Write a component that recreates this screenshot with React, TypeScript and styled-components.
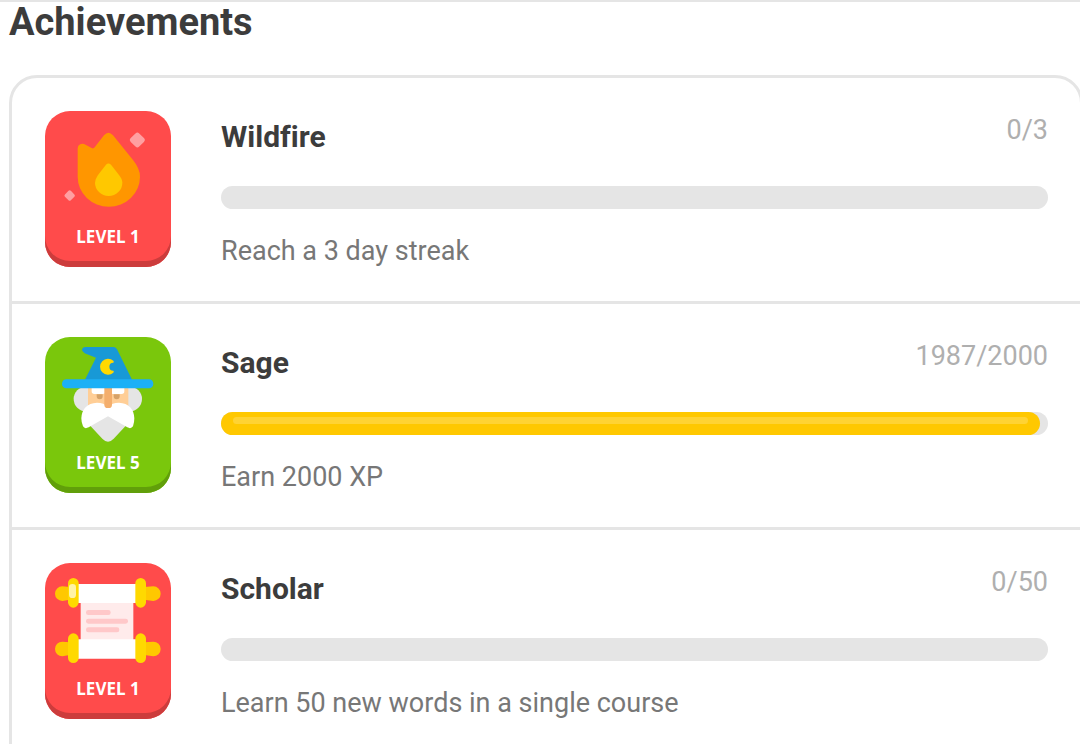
import React from "react";
import styled, { createGlobalStyle } from "styled-components";

const GlobalStyle = createGlobalStyle`
  *, *::before, *::after { box-sizing: border-box; }
  html { overflow-x: hidden; }
  body {
    margin: 0;
    background: #fff;
    color: #3c3c3c;
    font-family: Roboto, "Liberation Sans", sans-serif;
    overflow-x: hidden;
  }
`;

const Page = styled.main`
  border-top: 2px solid #e5e5e5;
  padding-left: 9px;
`;

const Heading = styled.h1`
  margin: 0 0 33px;
  font-size: 38px;
  line-height: 40px;
  font-weight: 700;
`;

const List = styled.ul`
  list-style: none;
  margin: 0 -3px 0 0;
  padding: 0;
  border: 3px solid #e5e5e5;
  border-radius: 28px 28px 0 0;
`;

const Row = styled.li`
  display: flex;
  gap: 50px;
  padding: 33px 32px 34px 33px;

  & + & {
    border-top: 3px solid #e5e5e5;
  }
`;

const Badge = styled.div<{ $face: string; $edge: string }>`
  flex: none;
  display: flex;
  flex-direction: column;
  align-items: center;
  width: 126px;
  height: 156px;
  border-radius: 25px;
  background: ${(p) => p.$face};
  box-shadow: inset 0 -6px 0 ${(p) => p.$edge};
`;

const Art = styled.svg`
  display: block;
  width: 126px;
  height: 114px;
`;

const Level = styled.span`
  color: #fff;
  font-family: "Noto Sans", sans-serif;
  font-size: 17px;
  line-height: 24px;
  font-weight: 700;
`;

const Details = styled.div`
  flex: 1;
  min-width: 0;
`;

const TitleLine = styled.div`
  display: flex;
  justify-content: space-between;
  align-items: flex-start;
  margin-bottom: 23px;
`;

const Title = styled.h2`
  margin: 0;
  font-size: 30px;
  line-height: 52px;
  font-weight: 700;
  font-variant-ligatures: none;
`;

const Count = styled.span`
  color: #afafaf;
  font-size: 27px;
  line-height: 38px;
`;

const Track = styled.div`
  height: 23px;
  border-radius: 12px;
  background: #e5e5e5;
`;

const Fill = styled.div`
  height: 100%;
  padding: 5px 12px;
  border-radius: 12px;
  background: #ffc800;
`;

const Shine = styled.div`
  height: 7px;
  border-radius: 4px;
  background: rgba(255, 255, 255, 0.2);
`;

const Description = styled.p`
  margin: 26px 0 0;
  color: #777;
  font-size: 27px;
  line-height: 32px;
`;

const Flame = () => (
  <Art viewBox="30 33 378 342" aria-hidden="true">
    <path
      fill="#ff9600"
      d="M128 146Q128 132 142 131Q147 131 153 135L170 144Q175 147 179 142L207 106Q220 91 234 106L294 180Q315 206 315 230A93.500 90 0 0 1 128 230Z"
    />
    <path
      fill="#ffc800"
      d="M213 194Q220 187 228 194L252 225Q262 238 262 248A41 40 0 0 1 180 248Q180 238 189 225Z"
    />
    <rect x="289" y="102" width="36" height="36" rx="8" fill="#ff9fa1" transform="rotate(45 307 120)" />
    <rect x="92" y="274" width="25" height="25" rx="5" fill="#ff9fa1" transform="rotate(45 104 286)" />
  </Art>
);

const Wizard = () => (
  <Art viewBox="30 36 378 342" aria-hidden="true">
    <circle cx="153" cy="222" r="37" fill="#e5e5e5" />
    <circle cx="284" cy="222" r="37" fill="#e5e5e5" />
    <path fill="#ffce96" d="M159 180H280V262H159Z" />
    <path fill="#d6a268" d="M185 208H203V214A9 9 0 0 1 185 214ZM236 208H254V214A9 9 0 0 1 236 214Z" />
    <path fill="#fff" d="M170 186H211V200Q211 207 204 207H178Q170 207 170 199ZM227 186H268V199Q268 207 260 207H234Q227 207 227 200Z" />
    <path fill="#e5e5e5" d="M160 296L219 262L278 296L236 341Q219 359 202 341Z" />
    <path
      fill="#fff"
      d="M219 274L161 307Q149 313 144 304Q139 293 139 280Q141 236 186 233Q207 233 219 246Q231 233 252 233Q296 236 298 280Q298 293 294 304Q288 313 277 307Z"
    />
    <path fill="#f4ae6c" d="M208 186H231V239Q231 249 221 249H218Q208 249 208 239Z" />
    <path fill="#1899d6" d="M148 168L183 98L149 85Q140 80 141 73Q143 66 152 66H235Q242 66 246 73L293 168Z" />
    <rect x="81" y="163" width="274" height="27" rx="13" fill="#1cb0f6" />
    <path fill="#ffd900" d="M235 107A24 24 0 1 0 235 143Q238 139 235 137A12 12 0 0 1 235 113Q238 110 235 107Z" />
  </Art>
);

const Scroll = () => (
  <Art viewBox="30 39 378 342" aria-hidden="true">
    <path fill="#ffebeb" d="M137 156H295V272H137Z" />
    <path fill="#fff" d="M125 102H307V159H125ZM125 268H307V326H125Z" />
    <g fill="#ffc8c9">
      <rect x="153" y="180" width="74" height="15" rx="7" />
      <rect x="153" y="206" width="126" height="15" rx="7" />
      <rect x="153" y="232" width="100" height="15" rx="7" />
    </g>
    {[0, 166].map((dy) => (
      <g key={dy} transform={`translate(0 ${dy})`}>
        <path
          fill="#ffc800"
          d="M104 111L82 109A22 22 0 0 0 82 153L104 149ZM328 111L355 109A22 22 0 0 1 355 153L328 149Z"
        />
        <rect x="99" y="84" width="32" height="89" rx="16" fill="#ffd900" />
        <rect x="301" y="84" width="32" height="89" rx="16" fill="#ffd900" />
      </g>
    ))}
    <rect x="102" y="102" width="21" height="42" rx="10" fill="#fff3a6" />
  </Art>
);

const RED = { face: "#ff4b4b", edge: "#cc3c3c" };
const GREEN = { face: "#7ac70c", edge: "#619f0a" };

const achievements = [
  { title: "Wildfire", text: "Reach a 3 day streak", value: 0, goal: 3, level: 1, colors: RED, Icon: Flame },
  { title: "Sage", text: "Earn 2000 XP", value: 1987, goal: 2000, level: 5, colors: GREEN, Icon: Wizard },
  { title: "Scholar", text: "Learn 50 new words in a single course", value: 0, goal: 50, level: 1, colors: RED, Icon: Scroll },
];

const wholePercent = (value: number, goal: number) => Math.floor((value / goal) * 100);

export default function App() {
  return (
    <>
      <GlobalStyle />
      <Page>
        <Heading>Achievements</Heading>
        <List>
          {achievements.map(({ title, text, value, goal, level, colors, Icon }) => (
            <Row key={title}>
              <Badge $face={colors.face} $edge={colors.edge}>
                <Icon />
                <Level>LEVEL {level}</Level>
              </Badge>
              <Details>
                <TitleLine>
                  <Title>{title}</Title>
                  <Count>{`${value}/${goal}`}</Count>
                </TitleLine>
                <Track role="progressbar" aria-label={title} aria-valuemin={0} aria-valuemax={goal} aria-valuenow={value}>
                  {value > 0 && (
                    <Fill style={{ width: `${wholePercent(value, goal)}%` }}>
                      <Shine />
                    </Fill>
                  )}
                </Track>
                <Description>{text}</Description>
              </Details>
            </Row>
          ))}
        </List>
      </Page>
    </>
  );
}
